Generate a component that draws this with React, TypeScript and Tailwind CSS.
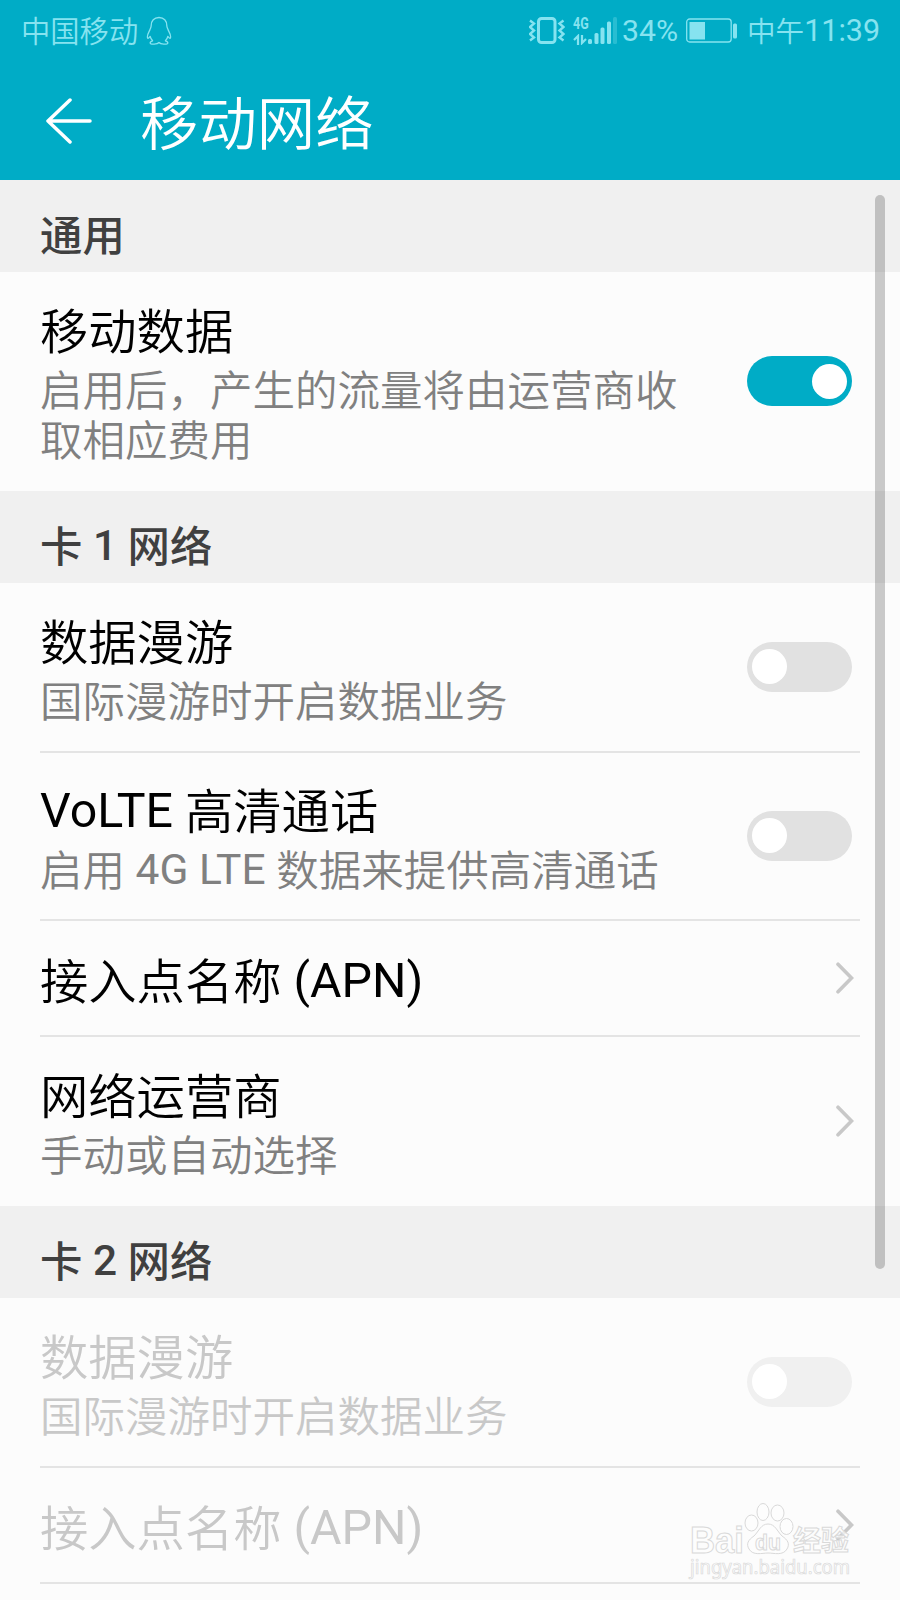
import type { ReactNode } from "react";

function Toggle({ on = false, disabled = false }: { on?: boolean; disabled?: boolean }) {
  const track = on ? "justify-end bg-[#00acc6]" : disabled ? "justify-start bg-[#f0f0f0]" : "justify-start bg-[#e1e1e1]";
  return (
    <div className={`mr-[8px] mb-px flex h-[50px] w-[105px] shrink-0 items-center rounded-full px-[5px] ${track}`}>
      <div className="h-[35px] w-[35px] rounded-full bg-white" />
    </div>
  );
}

function Chevron() {
  return (
    <svg className="mr-[6px] mb-px h-[34px] w-[20px] shrink-0" viewBox="0 0 20 34" fill="none" stroke="#c8c8c8" strokeWidth="3.6" strokeLinecap="round">
      <path d="M4 3.200 17.500 17 4 30.800" />
    </svg>
  );
}

/* Latin runs sit slightly above the baseline of the Chinese glyphs. */
function Mixed({ text }: { text: string }) {
  return text.split(/([\x21-\x7e]+(?: [\x21-\x7e]+)*)/).map((part, i) =>
    i % 2 ? <span key={i} className="align-[2px] leading-none">{part}</span> : part
  );
}

function Section({ text }: { text: string }) {
  return (
    <h2 className="h-[92px] bg-[#f0f0f0] pt-[27px] pl-10 font-[Roboto,'Noto_Sans_CJK_SC_Medium','Noto_Sans_CJK_SC',sans-serif] text-[42.4px] leading-[60px] font-medium text-[#404040]">
      <Mixed text={text} />
    </h2>
  );
}

type RowProps = {
  title: string;
  sub?: string;
  height: string;
  divider?: boolean;
  disabled?: boolean;
  children: ReactNode;
};

function Row({ title, sub, height, divider = false, disabled = false, children }: RowProps) {
  return (
    <div className={`mr-10 ml-10 flex items-center justify-between ${height} ${divider ? "border-b-2 border-[#e4e4e4]" : ""}`}>
      <div className={`w-[650px] ${sub ? "pt-[7px]" : "pt-[9px]"} ${disabled ? "text-[#c8c8c8]" : "text-black"}`}>
        <div className="text-[48.3px] leading-[60px] whitespace-nowrap"><Mixed text={title} /></div>
        {sub && <div className={`mt-[4px] text-[42.5px] leading-[50px] ${disabled ? "text-[#c8c8c8]" : "text-[#808080]"}`}><Mixed text={sub} /></div>}
      </div>
      {children}
    </div>
  );
}

function StatusBar() {
  return (
    <div className="flex h-[62px] items-center justify-between pr-[20px] pl-[21px] text-[29.3px] leading-[40px] text-[#86e3f0]">
      <div className="flex items-center gap-[8px]">
        <span className="pt-[2px]">中国移动</span>
        <svg className="h-[30px] w-[26px]" viewBox="0 0 26 30" fill="none" stroke="currentColor" strokeWidth="1.3" strokeLinejoin="round">
          <path d="M13 1.5C8 1.5 5.2 5 5.2 9.5c0 2-.8 2.8-1.2 4-.6 2-2.6 4-2.6 7.3 0 2.2.9 2 2.8-.4.4 2 1.100 3.200 2.400 4.400-2 .6-2.600 1.300-2.400 2.300.4 1.500 7.300 1.500 8.800-.6 1.500 2.100 8.400 2.100 8.800.6.2-1-.4-1.700-2.400-2.300 1.300-1.200 2-2.400 2.400-4.400 1.900 2.400 2.800 2.600 2.800.4 0-3.300-2-5.300-2.600-7.300-.4-1.200-1.200-2-1.200-4C20.800 5 18 1.500 13 1.500Z" />
        </svg>
      </div>
      <div className="flex items-center">
        <svg className="h-[30px] w-[36px]" viewBox="0 0 36 30" fill="none" stroke="currentColor">
          <rect x="9.500" y="2.500" width="16.500" height="24" rx="3" strokeWidth="3" />
          <path d="M1 4.500l4 3-4 3.500 4 3.500-4 3.500 4 3.500-4 3M34.500 4.500l-4 3 4 3.500-4 3.500 4 3.500-4 3.500 4 3" strokeWidth="2.400" />
        </svg>
        <div className="ml-[8px] flex h-[28px] w-[15px] flex-col justify-between">
          <span className="origin-left scale-x-[0.78] text-[16px] leading-[14px] font-bold">4G</span>
          <svg className="h-[11px] w-[14px]" viewBox="0 0 14 11" fill="none" stroke="currentColor" strokeWidth="2.200">
            <path d="M5 11V2L1 6M9 1v8l4-4" />
          </svg>
        </div>
        <svg className="h-[30px] w-[29px]" viewBox="0 0 29 30" fill="currentColor">
          <rect x="0" y="23" width="4" height="5" rx="1.500" />
          <rect x="6.500" y="17" width="4" height="11" rx="1.500" />
          <rect x="12.500" y="11.500" width="4" height="16.500" rx="1.500" />
          <rect x="19" y="5.500" width="4" height="22.500" rx="1.500" />
          <rect x="25" y="1" width="4" height="27" rx="1.500" opacity="0.3" />
        </svg>
        <span className="ml-[5px] w-[56px] text-[30.200px] whitespace-nowrap">34%</span>
        <svg className="ml-[8px] h-[26px] w-[51px]" viewBox="0 0 51 26" fill="none" stroke="currentColor">
          <rect x="0.700" y="1" width="44.500" height="23" rx="3" strokeWidth="1.300" />
          <rect x="3.500" y="4" width="15.500" height="17.500" fill="currentColor" stroke="none" />
          <rect x="47" y="5.500" width="4" height="15" rx="1.500" fill="currentColor" stroke="none" />
        </svg>
        <div className="ml-[10px] flex w-[133px] items-center justify-between whitespace-nowrap">
          <span className="pt-[2px] text-[28.600px]">中午</span>
          <span className="text-[30.500px]">11:39</span>
        </div>
      </div>
    </div>
  );
}

function Watermark() {
  return (
    <svg className="absolute top-[1500px] left-[686px] h-[84px] w-[170px]" viewBox="0 0 170 84" fill="#fdfdfd" stroke="#d9d9d9" strokeWidth="1">
      <text x="4" y="53" fontSize="36" fontWeight="700" textLength="54" lengthAdjust="spacingAndGlyphs" fontFamily="Liberation Sans, sans-serif">Bai</text>
      <ellipse cx="65.500" cy="23" rx="6.500" ry="8" />
      <ellipse cx="77" cy="12" rx="6" ry="8.500" />
      <ellipse cx="91.500" cy="13" rx="6.500" ry="8" />
      <ellipse cx="100.500" cy="26.500" rx="6.500" ry="8" />
      <path d="M82 24c-7 0-9 7-14 12-6 4-8 8-5 13 4 7 13 4 19 4s15 3 19-4c3-5 1-9-5-13-5-5-7-12-14-12Z" />
      <text x="69" y="50" fontSize="22" fontWeight="700" textLength="26" lengthAdjust="spacingAndGlyphs" fontFamily="Liberation Sans, sans-serif">du</text>
      <text x="107" y="51" fontSize="28" fontWeight="700" fillOpacity="0.7" fontFamily="Noto Sans CJK SC, sans-serif">经验</text>
      <text x="4" y="74" fontSize="19" strokeWidth="0.700" textLength="160" lengthAdjust="spacingAndGlyphs" fontFamily="Noto Sans, sans-serif">jingyan.baidu.com</text>
    </svg>
  );
}

export default function App() {
  return (
    <div className="relative h-[1600px] w-[900px] overflow-hidden bg-[#fcfcfc] font-[Roboto,'Noto_Sans_CJK_SC_DemiLight','Noto_Sans_CJK_SC',sans-serif]">
      <header className="h-[180px] bg-[#00acc6]">
        <StatusBar />
        <div className="flex h-[118px] items-center pl-[46px] text-white">
          <svg className="h-[48px] w-[48px]" viewBox="0 0 48 48" fill="none" stroke="currentColor" strokeWidth="3.500" strokeLinecap="round" strokeLinejoin="round">
            <path d="M24 3 2 24l22 21M2 24h42" />
          </svg>
          <h1 className="ml-[46px] pt-[7px] text-[58.400px] leading-[80px]">移动网络</h1>
        </div>
      </header>
      <Section text="通用" />
      <Row title="移动数据" sub="启用后，产生的流量将由运营商收取相应费用" height="h-[219px]"><Toggle on /></Row>
      <Section text="卡 1 网络" />
      <Row title="数据漫游" sub="国际漫游时开启数据业务" height="h-[170px]" divider><Toggle /></Row>
      <Row title="VoLTE 高清通话" sub="启用 4G LTE 数据来提供高清通话" height="h-[168px]" divider><Toggle /></Row>
      <Row title="接入点名称 (APN)" height="h-[116px]" divider><Chevron /></Row>
      <Row title="网络运营商" sub="手动或自动选择" height="h-[169px]"><Chevron /></Row>
      <Section text="卡 2 网络" />
      <Row title="数据漫游" sub="国际漫游时开启数据业务" height="h-[170px]" divider disabled><Toggle disabled /></Row>
      <Row title="接入点名称 (APN)" height="h-[116px]" divider disabled><Chevron /></Row>
      <div className="absolute top-[195px] left-[875px] h-[1074px] w-[10px] rounded-full bg-black/20" />
      <Watermark />
    </div>
  );
}
